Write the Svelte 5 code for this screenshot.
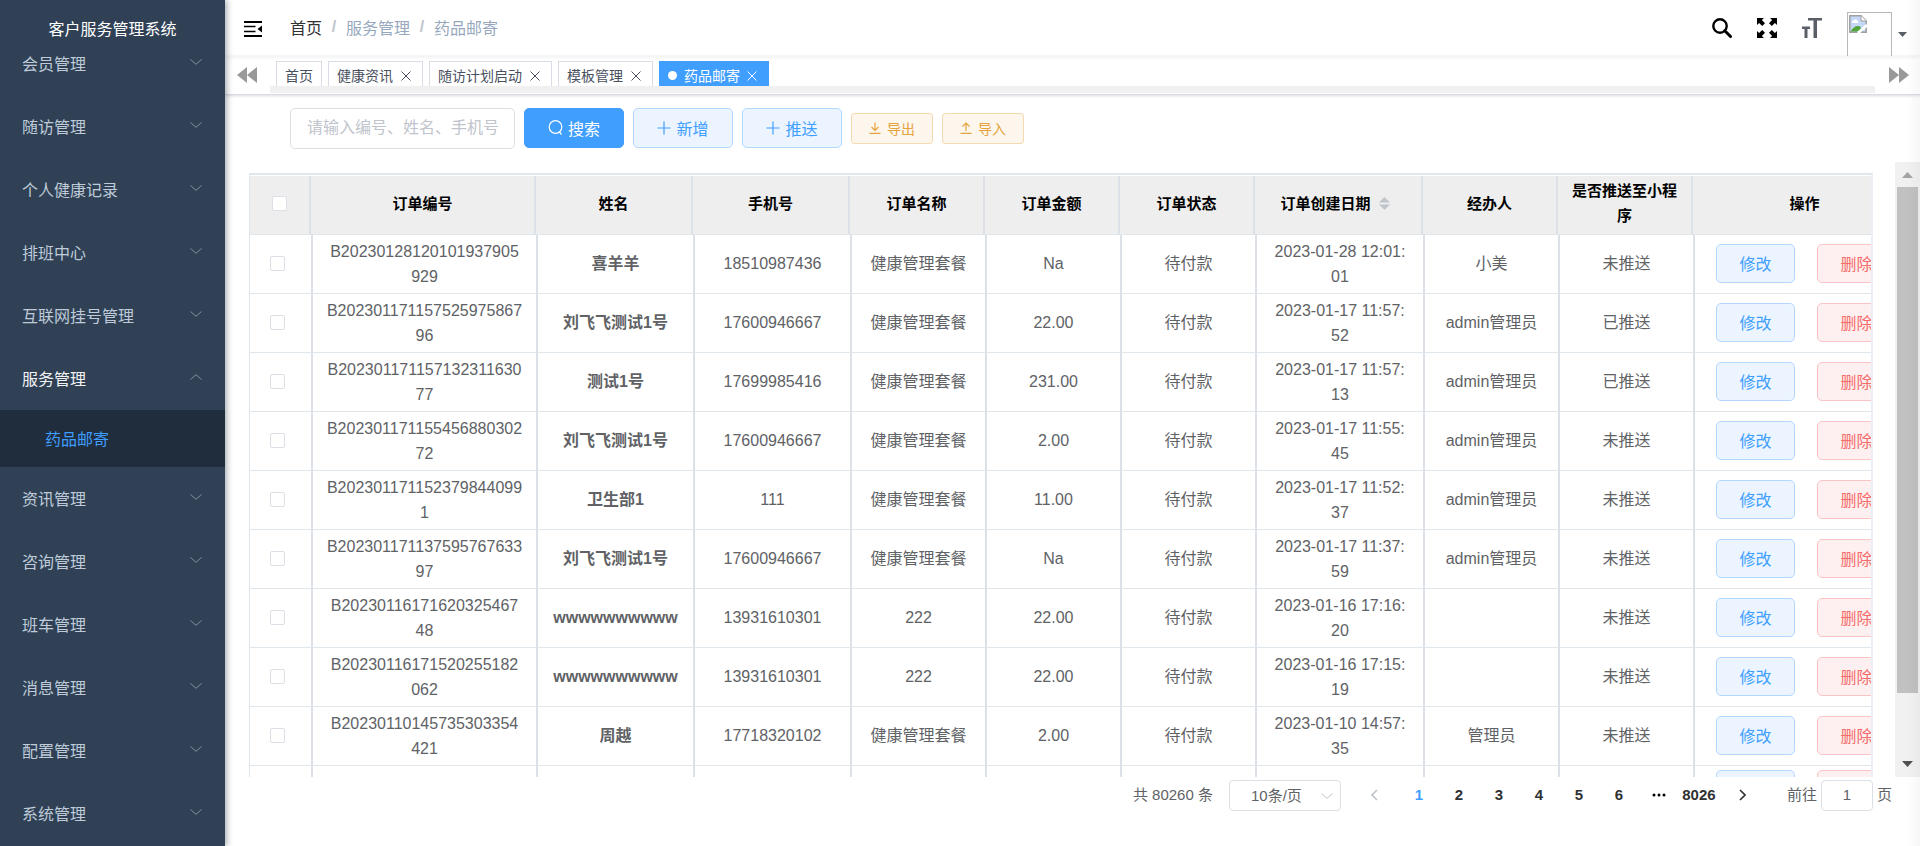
<script>
  const menuTop = ['会员管理', '随访管理', '个人健康记录', '排班中心', '互联网挂号管理'];
  const menuBottom = ['资讯管理', '咨询管理', '班车管理', '消息管理', '配置管理', '系统管理'];
  const tags = ['健康资讯', '随访计划启动', '模板管理'];
  const pages = [2, 3, 4, 5, 6];
  const rows = [
    { no: ['B20230128120101937905', '929'], name: '喜羊羊', phone: '18510987436', item: '健康管理套餐', money: 'Na', date: ['2023-01-28 12:01:', '01'], by: '小美', push: '未推送' },
    { no: ['B202301171157525975867', '96'], name: '刘飞飞测试1号', phone: '17600946667', item: '健康管理套餐', money: '22.00', date: ['2023-01-17 11:57:', '52'], by: 'admin管理员', push: '已推送' },
    { no: ['B202301171157132311630', '77'], name: '测试1号', phone: '17699985416', item: '健康管理套餐', money: '231.00', date: ['2023-01-17 11:57:', '13'], by: 'admin管理员', push: '已推送' },
    { no: ['B202301171155456880302', '72'], name: '刘飞飞测试1号', phone: '17600946667', item: '健康管理套餐', money: '2.00', date: ['2023-01-17 11:55:', '45'], by: 'admin管理员', push: '未推送' },
    { no: ['B202301171152379844099', '1'], name: '卫生部1', phone: '111', item: '健康管理套餐', money: '11.00', date: ['2023-01-17 11:52:', '37'], by: 'admin管理员', push: '未推送' },
    { no: ['B202301171137595767633', '97'], name: '刘飞飞测试1号', phone: '17600946667', item: '健康管理套餐', money: 'Na', date: ['2023-01-17 11:37:', '59'], by: 'admin管理员', push: '未推送' },
    { no: ['B20230116171620325467', '48'], name: 'wwwwwwwwww', phone: '13931610301', item: '222', money: '22.00', date: ['2023-01-16 17:16:', '20'], by: '', push: '未推送' },
    { no: ['B20230116171520255182', '062'], name: 'wwwwwwwwww', phone: '13931610301', item: '222', money: '22.00', date: ['2023-01-16 17:15:', '19'], by: '', push: '未推送' },
    { no: ['B20230110145735303354', '421'], name: '周越', phone: '17718320102', item: '健康管理套餐', money: '2.00', date: ['2023-01-10 14:57:', '35'], by: '管理员', push: '未推送' }
  ];
</script>

{#snippet chevron(up)}
  <svg class="chev" width="12" height="6" viewBox="0 0 12 6" fill="none" stroke="currentColor"><path d={up ? 'M.5 5.500L6 .7l5.500 4.800' : 'M.5.5L6 5.300 11.500.5'} /></svg>
{/snippet}

{#snippet cross()}
  <svg width="10" height="10" viewBox="0 0 10 10" fill="none" stroke="currentColor"><path d="M.5.5l9 9M9.500.5l-9 9" /></svg>
{/snippet}

{#snippet plus()}
  <svg width="14" height="14" viewBox="0 0 14 14" fill="none" stroke="currentColor" stroke-width="1.200"><path d="M7 .5v13M.5 7h13" /></svg>
{/snippet}

{#snippet cols(first)}
  <colgroup>
    <col class={first} /><col class="w-wide" /><col class="w-name" /><col class="w-name" />
    <col class="w-std" /><col class="w-std" /><col class="w-std" /><col class="w-date" />
    <col class="w-std" /><col class="w-std" /><col class="w-wide" />
  </colgroup>
{/snippet}

<div class="layout">
  <aside>
    <h1>客户服务管理系统</h1>
    <nav>
      {#each menuTop as m}
        <a class="item" href="#menu"><span>{m}</span>{@render chevron(false)}</a>
      {/each}
      <a class="item open" href="#menu"><span>服务管理</span>{@render chevron(true)}</a>
      <a class="sub" href="#menu">药品邮寄</a>
      {#each menuBottom as m}
        <a class="item" href="#menu"><span>{m}</span>{@render chevron(false)}</a>
      {/each}
    </nav>
  </aside>

  <main>
    <header>
      <button class="plain burger" aria-label="收起菜单">
        <svg width="18" height="16" viewBox="0 0 18 16"><path d="M0 0h18v2H0zM0 4.700h11.500v1.600H0zM0 9.700h11.500v1.600H0zM0 14h18v2H0zM18 4.500v7L13.500 8z" /></svg>
      </button>
      <div class="crumbs">
        <a href="#home">首页</a><i>/</i><span>服务管理</span><i>/</i><span>药品邮寄</span>
      </div>
      <div class="tools">
        <button class="plain" aria-label="搜索菜单">
          <svg width="20" height="20" viewBox="0 0 20 20" fill="none" stroke="#000"><circle cx="8" cy="8" r="6.700" stroke-width="2.400" /><path d="M12.800 12.800L18.500 18.500" stroke-width="3" stroke-linecap="round" /></svg>
        </button>
        <button class="plain" aria-label="全屏">
          <svg width="20" height="20" viewBox="0 0 20 20"><path d="M0 0h7L4.900 2.100 8 5.200 5.200 8 2.100 4.900 0 7zM20 0v7l-2.100-2.100L14.800 8 12 5.200l3.100-3.100L13 0zM0 20v-7l2.100 2.100L5.200 12 8 14.800l-3.100 3.100L7 20zM20 20h-7l2.100-2.100L12 14.800l2.800-2.800 3.100 3.100L20 13z" /></svg>
        </button>
        <button class="plain" aria-label="字号">
          <svg width="20" height="20" viewBox="0 0 20 20" fill="#5a5e66"><path d="M6 0h14v2.600h-5V20h-3.500V2.600H6zM0 8.500h8v2.600H5.500V20h-3v-8.900H0z" /></svg>
        </button>
        <button class="plain user" aria-label="用户">
          <span class="avatar">
            <svg width="18" height="18" viewBox="0 0 18 18">
              <path d="M.8.800H12l5.200 5.200v11.200H.8z" fill="#c5d8f7" stroke="#a0a0a0" stroke-width="1.500" />
              <path d="M12 .8V6h5.200" fill="#fff" stroke="#a0a0a0" />
              <path d="M3 8a2 2 0 0 1 1.500-2.500 2.200 2.200 0 0 1 4 .5A1.300 1.300 0 0 1 9 8z" fill="#fff" />
              <path d="M1.500 16.500C4 12 8 10 11 11.500l3 5z" fill="#51a53a" />
              <path d="M9 18l9-8" stroke="#fff" stroke-width="3" />
            </svg>
          </span>
          <svg width="9" height="5" viewBox="0 0 9 5" fill="#5a5e66"><path d="M0 0h9L4.500 5z" /></svg>
        </button>
      </div>
    </header>

    <div class="tagbar">
      <button class="plain" aria-label="向左">
        <svg width="20" height="16" viewBox="0 0 20 16" fill="#999"><path d="M10 0v16L0 8zM20 0v16L10 8z" /></svg>
      </button>
      <div class="tags">
        <div class="taglist">
          <a class="tag" href="#tag">首页</a>
          {#each tags as t}
            <a class="tag" href="#tag">{t}{@render cross()}</a>
          {/each}
          <a class="tag active" href="#tag"><b></b>药品邮寄{@render cross()}</a>
        </div>
      </div>
      <button class="plain" aria-label="向右">
        <svg width="20" height="16" viewBox="0 0 20 16" fill="#999"><path d="M0 0v16l10-8zM10 0v16l10-8z" /></svg>
      </button>
    </div>

    <div class="toolbar">
      <input type="text" aria-label="搜索条件" placeholder="请输入编号、姓名、手机号" />
      <button class="btn primary">
        <svg width="15" height="15" viewBox="0 0 15 15" fill="none" stroke="currentColor" stroke-width="1.200"><circle cx="7.500" cy="7" r="6.300" /><path d="M11 11.500l2.500 3" /></svg>搜索
      </button>
      <button class="btn light">{@render plus()}新增</button>
      <button class="btn light">{@render plus()}推送</button>
      <button class="btn warn">
        <svg width="12" height="12" viewBox="0 0 12 12" fill="none" stroke="currentColor" stroke-width="1.200"><path d="M6 .5v8M2.500 5L6 8.500 9.500 5M.5 11.400h11" /></svg>导出
      </button>
      <button class="btn warn">
        <svg width="12" height="12" viewBox="0 0 12 12" fill="none" stroke="currentColor" stroke-width="1.200"><path d="M6 9V1M2.500 4.500L6 1l3.500 3.500M.5 11.400h11" /></svg>导入
      </button>
    </div>

    <div class="scroller">
      <div class="tables">
        <table class="head">
          {@render cols('w-check')}
          <thead>
            <tr>
              <th><input type="checkbox" aria-label="全选" /></th>
              <th>订单编号</th><th>姓名</th><th>手机号</th><th>订单名称</th><th>订单金额</th><th>订单状态</th>
              <th><span class="sortable">订单创建日期<svg width="11" height="13" viewBox="0 0 11 13" fill="#c0c4cc"><path d="M0 5.500L5.500 0 11 5.500zM0 7.500h11L5.500 13z" /></svg></span></th>
              <th>经办人</th><th>是否推送至小程序</th><th>操作</th>
            </tr>
          </thead>
        </table>
        <table class="body">
          {@render cols('w-check-body')}
          <tbody>
            {#each rows as r}
              <tr>
                <td><input type="checkbox" aria-label="选择" /></td>
                <td class="two">{r.no[0]}<br />{r.no[1]}</td>
                <td><strong>{r.name}</strong></td>
                <td>{r.phone}</td>
                <td>{r.item}</td>
                <td>{r.money}</td>
                <td>待付款</td>
                <td class="two">{r.date[0]}<br />{r.date[1]}</td>
                <td>{r.by}</td>
                <td>{r.push}</td>
                <td><div class="ops"><button class="btn light">修改</button><button class="btn danger">删除</button></div></td>
              </tr>
            {/each}
            <tr>
              <td></td><td></td><td></td><td></td><td></td><td></td><td></td><td></td><td></td><td></td>
              <td class="two"><div class="ops"><button class="btn light" aria-label="修改"></button><button class="btn danger" aria-label="删除"></button></div></td>
            </tr>
          </tbody>
        </table>
      </div>
      <div class="bar">
        <svg width="11" height="6" viewBox="0 0 11 6" fill="#a3a3a3"><path d="M0 6h11L5.500 0z" /></svg>
        <div class="thumb"></div>
        <svg width="11" height="6" viewBox="0 0 11 6" fill="#505050"><path d="M0 0h11L5.500 6z" /></svg>
      </div>
    </div>

    <div class="pager">
      <span class="total">共 80260 条</span>
      <div class="size">
        <select aria-label="每页条数"><option>10条/页</option></select>
        {@render chevron(false)}
      </div>
      <button class="plain arrow off" aria-label="上一页"><svg width="7" height="12" viewBox="0 0 7 12" fill="none" stroke="currentColor" stroke-width="1.600"><path d="M6 1L1 6l5 5" /></svg></button>
      <div class="nums">
        <button class="plain on">1</button>
        {#each pages as p}<button class="plain">{p}</button>{/each}
        <button class="plain" aria-label="更多"><svg width="14" height="4" viewBox="0 0 14 4"><circle cx="2" cy="2" r="1.500" /><circle cx="7" cy="2" r="1.500" /><circle cx="12" cy="2" r="1.500" /></svg></button>
        <button class="plain">8026</button>
      </div>
      <button class="plain arrow" aria-label="下一页"><svg width="7" height="12" viewBox="0 0 7 12" fill="none" stroke="currentColor" stroke-width="1.600"><path d="M1 1l5 5-5 5" /></svg></button>
      <label>前往<input type="text" value="1" />页</label>
    </div>
  </main>
</div>

<style>
  :global(body) { font-family: "Liberation Sans", "Noto Sans CJK SC", sans-serif; color: #606266; }
  * { box-sizing: border-box; }
  a { color: inherit; text-decoration: none; }
  button, input, select { font-family: inherit; margin: 0; }
  .plain { border: 0; background: none; padding: 0; color: inherit; display: flex; align-items: center; justify-content: center; }
  svg { display: block; flex: none; }

  .layout { display: flex; height: 100vh; overflow: hidden; position: relative; }
  .layout::after { content: ""; position: absolute; top: 0; right: 0; bottom: 0; width: 14px; pointer-events: none; background: linear-gradient(to right, rgba(0, 0, 0, 0), rgba(0, 0, 0, .03)); }

  aside { width: 225px; flex: none; background: #304156; color: #bfcbd9; overflow: hidden; box-shadow: 2px 0 6px rgba(0, 21, 41, .35); z-index: 2; font-size: 16px; }
  h1 { margin: 0; height: 32px; padding-top: 20px; line-height: 20px; font-size: 16px; font-weight: 400; color: #fff; text-align: center; }
  .item { display: flex; align-items: center; justify-content: space-between; height: 63px; padding: 0 23px 1px 22px; }
  .item .chev { margin-bottom: 3px; color: #8390a0; }
  .open { color: #f4f4f5; }
  .sub { display: flex; align-items: center; height: 57px; padding: 0 0 2px 45px; background: #1f2d3d; color: #409eff; }

  main { flex: 1; min-width: 0; display: flex; flex-direction: column; background: #fff; }
  header { height: 56px; flex: none; display: flex; align-items: center; padding: 0 13px 0 19px; box-shadow: 0 1px 4px rgba(0, 21, 41, .08); overflow: hidden; clip-path: inset(0 0 -4px 0); }
  .burger { margin-top: 2px; }
  .crumbs { display: flex; align-items: center; margin: 0 0 2px 28px; font-size: 16px; color: #97a8be; }
  .crumbs a { color: #303133; }
  .crumbs i { width: 24px; text-align: center; font-style: normal; font-weight: 700; color: #c0c4cc; }
  .tools { margin-left: auto; display: flex; align-items: center; gap: 25px; align-self: stretch; }
  .user { align-self: flex-start; gap: 6px; margin-top: 12px; height: 45px; }
  .avatar { width: 45px; height: 45px; border: 1px solid #b8b8b8; padding: 2px 1px; }

  .tagbar { height: 39px; flex: none; display: flex; align-items: flex-start; padding: 0 10px 0 11px; border-bottom: 1px solid #d8dce5; box-shadow: 0 1px 3px rgba(0, 0, 0, .12), 0 0 3px rgba(0, 0, 0, .04); }
  .tagbar > .plain { height: 38px; width: 22px; }
  .tags { flex: 1; margin: 0 13px 0 12px; min-width: 0; }
  .taglist { display: flex; gap: 6px; height: 37px; padding: 5px 0 0 6px; border-bottom: 7px solid #f0f0f0; overflow: hidden; }
  .tag { display: flex; flex: none; align-items: center; gap: 8px; height: 29px; padding: 0 8px 1px; border: 1px solid #d8dce5; background: #fff; color: #495060; font-size: 14px; }
  .tag svg { margin: 2px 3px 0 0; }
  .tag.active { background: #409eff; border-color: #409eff; color: #fff; gap: 7px; }
  .tag b { width: 9px; height: 9px; border-radius: 50%; background: #fff; }

  .toolbar { display: flex; align-items: center; gap: 9px; padding: 13px 65px; flex: none; }
  .toolbar input { width: 225px; height: 41px; padding: 0 16px 2px; border: 1px solid #dcdfe6; border-radius: 5px; font-size: 16px; color: #606266; }
  .toolbar input::placeholder { color: #c0c4cc; opacity: 1; }
  .btn { display: flex; align-items: center; justify-content: center; gap: 5px; height: 40px; width: 100px; padding: 0 0 1px; border: 1px solid; border-radius: 5px; font-size: 16px; }
  .toolbar .primary, .toolbar .light { align-self: flex-start; }
  .primary { background: #409eff; border-color: #409eff; color: #fff; }
  .light { background: #ecf5ff; border-color: #b3d8ff; color: #409eff; }
  .warn { width: 82px; height: 31px; padding-bottom: 2px; border-radius: 3px; font-size: 14px; background: #fdf6ec; border-color: #f5dab1; color: #e6a23c; gap: 6px; }
  .danger { background: #fef0f0; border-color: #fbc4c4; color: #f56c6c; }

  .scroller { flex: 1; min-height: 0; display: flex; justify-content: space-between; gap: 22px; }
  .tables { flex: 1; min-width: 0; margin: 11px 0 0 24px; overflow: hidden; border-top: 2px solid #dfe6ec; border-left: 1px solid #dfe6ec; border-right: 2px solid #ebeef5; padding-top: 1px; }
  table { table-layout: fixed; border-collapse: separate; border-spacing: 0; }
  .head { width: 1668px; margin-left: -1px; }
  .body { width: 1670px; }
  .w-check { width: 62px; }
  .w-check-body { width: 63px; }
  .w-wide { width: 225px; }
  .w-name { width: 157px; }
  .w-std { width: 135px; }
  .w-date { width: 168px; }
  th, td { text-align: center; line-height: 25px; border-right: 2px solid #dce1e8; border-bottom: 1px solid #dfe6ec; }
  th { height: 59px; padding: 2px 11px 6px; background: #eee; color: #000; font-size: 15px; }
  td { height: 48px; padding: 3px 11px 5px; font-size: 16px; }
  td.two { padding: 4px 11px; }
  td:first-child { padding-right: 17px; }
  td:last-child { padding-left: 21px; }
  .sortable { display: flex; align-items: center; justify-content: center; gap: 8px; margin-right: 6px; }
  input[type="checkbox"] { appearance: none; display: block; width: 15px; height: 15px; margin: 0 auto; border: 1px solid #dcdfe6; border-radius: 2px; background: #fff; }
  .ops { display: flex; gap: 22px; }
  .ops .btn { width: 79px; height: 39px; flex: none; }

  .bar { width: 25px; flex: none; background: #f1f1f1; display: flex; flex-direction: column; align-items: center; padding: 10px 0; }
  .thumb { width: 21px; height: 85%; margin: 9px 0 auto; background: #c1c1c1; }

  .pager { flex: none; height: 69px; padding: 3px 28px 0 0; display: flex; justify-content: flex-end; align-items: flex-start; font-size: 15px; line-height: 29px; }
  .size { display: flex; align-items: center; position: relative; margin: 0 26px 0 16px; }
  .size select { appearance: none; width: 112px; height: 31px; padding: 0 21px; border: 1px solid #dcdfe6; border-radius: 4px; background: #fff; color: #606266; font-size: 15px; }
  .size .chev { position: absolute; right: 8px; color: #c0c4cc; }
  .arrow { width: 16px; height: 30px; color: #303133; }
  .off { color: #c0c4cc; }
  .nums { display: flex; margin: 0 16px; color: #303133; }
  .nums button { width: 40px; height: 31px; padding-bottom: 2px; font-size: 15px; font-weight: 700; }
  .nums .on { color: #409eff; }
  label { display: flex; gap: 4px; margin-left: 36px; }
  label input { width: 52px; height: 31px; border: 1px solid #dcdfe6; border-radius: 4px; padding: 0 0 2px; text-align: center; font-size: 15px; color: #606266; }
</style>
